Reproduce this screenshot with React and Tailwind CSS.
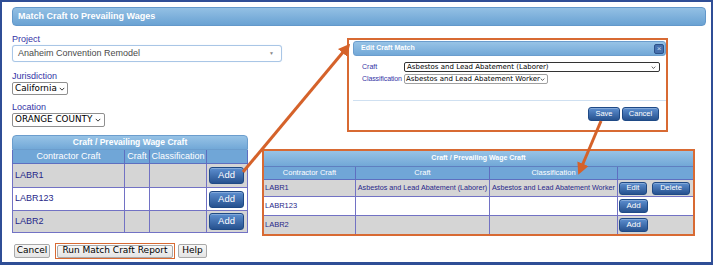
import React from 'react';

const labelCls = 'text-[9px] leading-[11px] text-[#3434a6]';

const Chevron = ({ className = '' }) => (
  <svg viewBox="0 0 8 5" className={className} fill="none" stroke="#222" strokeWidth="1.2">
    <path d="M1 1 L4 4 L7 1" />
  </svg>
);

const NativeSelect = ({ children, className = '' }) => (
  <div
    className={`flex items-center justify-between rounded-[2px] border border-[#8f8f8f] bg-white pl-[2px] pr-[3px] font-['DejaVu_Sans',sans-serif] text-black ${className}`}
  >
    <span className="whitespace-nowrap">{children}</span>
    <Chevron className="ml-[2px] h-[4px] w-[6px] shrink-0" />
  </div>
);

const BlueBtn = ({ children, className = '' }) => (
  <div
    className={`flex items-center justify-center rounded-[3px] border border-[#1f4a86] bg-linear-to-b from-[#5d8fd0] to-[#27528f] text-white shadow-[inset_0_1px_0_rgba(255,255,255,0.25)] ${className}`}
  >
    {children}
  </div>
);

const GrayBtn = ({ children, className = '' }) => (
  <div
    className={`flex items-center justify-center rounded-[2px] border border-[#a9a9a9] bg-linear-to-b from-[#f8f8f8] to-[#e4e4e4] font-['DejaVu_Sans',sans-serif] text-[9px] text-black ${className}`}
  >
    {children}
  </div>
);

const leftRows = [
  { name: 'LABR1', h: 'h-[24px]', bg: 'bg-[#d5d5d5]' },
  { name: 'LABR123', h: 'h-[23px]', bg: 'bg-white' },
  { name: 'LABR2', h: 'h-[22px]', bg: 'bg-[#d5d5d5]' },
];

const LeftTable = () => (
  <div className="w-[236px] shrink-0">
    <div className="flex h-[15px] items-center justify-center rounded-t-[4px] border border-[#6b9dcd] bg-linear-to-b from-[#97c3e6] to-[#72a8d7] text-[8.5px] font-bold text-white">
      Craft / Prevailing Wage Craft
    </div>
    <div className="flex h-[14px] border-x border-b border-[#5e6fc0] bg-[#70a6d7] text-[9px] text-white">
      <div className="flex w-[112px] items-center justify-center border-r border-[#5e6fc0]">Contractor Craft</div>
      <div className="flex w-[25px] items-center justify-center border-r border-[#5e6fc0]">Craft</div>
      <div className="flex w-[57px] items-center justify-center border-r border-[#5e6fc0]">Classification</div>
      <div className="flex-1" />
    </div>
    {leftRows.map((r) => (
      <div key={r.name} className={`flex ${r.h} ${r.bg} border-x border-b border-[#7272c4]`}>
        <div className="flex w-[112px] items-center border-r border-[#7272c4] pl-[2px] text-[9px] text-[#27278a]">
          {r.name}
        </div>
        <div className="w-[25px] border-r border-[#7272c4]" />
        <div className="w-[57px] border-r border-[#7272c4]" />
        <div className="flex flex-1 items-center pl-[2px]">
          <BlueBtn className="h-[17px] w-[35px] text-[9.5px]">Add</BlueBtn>
        </div>
      </div>
    ))}
  </div>
);

const rightRows = [
  { name: 'LABR1', h: 'h-[17px]', bg: 'bg-[#d5d5d5]', craft: 'Asbestos and Lead Abatement (Laborer)', cls: 'Asbestos and Lead Abatement Worker', edit: true },
  { name: 'LABR123', h: 'h-[19px]', bg: 'bg-white' },
  { name: 'LABR2', h: 'h-[18px]', bg: 'bg-[#d5d5d5]' },
];

const RightTable = () => (
  <div className="mt-[14px] ml-[14px] w-[433px] shrink-0 border-2 border-[#d86a33]">
    <div className="flex h-[16px] items-center justify-center border-b border-[#5e7fc0] bg-linear-to-b from-[#97c3e6] to-[#72a8d7] text-[7px] font-bold text-white">
      Craft / Prevailing Wage Craft
    </div>
    <div className="flex h-[13px] border-b border-[#5e6fc0] bg-[#70a6d7] text-[7.5px] text-white">
      <div className="flex w-[92px] items-center justify-center border-r border-[#5e6fc0]">Contractor Craft</div>
      <div className="flex w-[134px] items-center justify-center border-r border-[#5e6fc0]">Craft</div>
      <div className="flex w-[128px] items-center justify-center border-r border-[#5e6fc0]">Classification</div>
      <div className="flex-1" />
    </div>
    {rightRows.map((r, i) => (
      <div
        key={r.name}
        className={`flex ${r.h} ${r.bg} ${i < rightRows.length - 1 ? 'border-b border-[#7272c4]' : ''} text-[7.5px] text-[#27278a]`}
      >
        <div className="flex w-[92px] items-center border-r border-[#7272c4] pl-[1px]">{r.name}</div>
        <div className="flex w-[134px] items-center justify-center overflow-hidden whitespace-nowrap border-r border-[#7272c4] text-[7.2px]">
          {r.craft}
        </div>
        <div className="flex w-[128px] items-center justify-center overflow-hidden whitespace-nowrap border-r border-[#7272c4] text-[7.2px]">
          {r.cls}
        </div>
        <div className="flex flex-1 items-center gap-[5px] pl-[1px]">
          {r.edit ? (
            <>
              <BlueBtn className="h-[13px] w-[28px] text-[7.5px]">Edit</BlueBtn>
              <BlueBtn className="h-[13px] w-[38px] text-[7.5px]">Delete</BlueBtn>
            </>
          ) : (
            <BlueBtn className="h-[14px] w-[29px] text-[8px]">Add</BlueBtn>
          )}
        </div>
      </div>
    ))}
  </div>
);

const EditDialog = () => (
  <div className="mt-[4px] ml-[65px] h-[94px] w-[321px] shrink-0 border-2 border-[#d86a33] pt-[1px] pl-[4px]">
    <div className="flex h-[15px] items-center justify-between rounded-[3px] border border-[#6b9dcd] bg-linear-to-b from-[#97c3e6] to-[#72a8d7] pl-[7px] pr-[1px]">
      <span className="text-[7px] font-bold text-white">Edit Craft Match</span>
      <div className="flex h-[10px] w-[10px] items-center justify-center rounded-[2px] border border-[#2c5189] bg-[#4670ad] text-[8px] leading-none text-[#c9d8ee]">
        ×
      </div>
    </div>
    <div className="mt-[6px] flex h-[10px] items-center pl-[9px]">
      <span className="w-[42px] text-[7px] text-[#3434a6]">Craft</span>
      <div className="flex h-[10px] w-[256px] items-center justify-between rounded-[2px] border border-[#333] bg-white pl-[2px] pr-[3px] font-['DejaVu_Sans',sans-serif] text-[7px] text-black">
        <span>Asbestos and Lead Abatement (Laborer)</span>
        <Chevron className="h-[3px] w-[5px]" />
      </div>
    </div>
    <div className="mt-[2px] flex h-[10px] items-center pl-[9px]">
      <span className="w-[42px] text-[7px] tracking-[-0.1px] text-[#3434a6]">Classification</span>
      <div className="flex h-[10px] w-[144px] items-center justify-between rounded-[2px] border border-[#a0a0a0] bg-white pl-[1px] pr-[2px] font-['DejaVu_Sans',sans-serif] text-[7px] text-black">
        <span className="whitespace-nowrap">Asbestos and Lead Abatement Worker</span>
        <Chevron className="h-[3px] w-[5px]" />
      </div>
    </div>
    <div className="mt-[16px] h-px w-full bg-[#cfe0f1]" />
    <div className="mt-[6px] flex justify-end gap-[2px] pr-[7px]">
      <BlueBtn className="h-[14px] w-[32px] text-[7.5px]">Save</BlueBtn>
      <BlueBtn className="h-[14px] w-[37px] text-[7.5px]">Cancel</BlueBtn>
    </div>
  </div>
);

export default function App() {
  return (
    <div className="relative h-[265px] w-[713px] overflow-hidden bg-white font-['Liberation_Sans',Arial,sans-serif]">
      <div className="h-full w-full border-2 border-b-[3px] border-[#2f4e96] pl-[10px] pr-[5px]">
        <div className="mt-[5px] flex h-[19px] items-center rounded-[4px] border border-[#6398ca] bg-linear-to-b from-[#93c0e4] to-[#6aa2d3] pl-[5px] text-[9px] font-bold text-white">
          Match Craft to Prevailing Wages
        </div>

        <div className="mt-[8px] flex items-start">
          <div className="w-[270px] shrink-0">
            <div className={labelCls}>Project</div>
            <div className="flex h-[17px] items-center justify-between rounded-[3px] border border-[#a9c6e6] bg-white pl-[5px] pr-[7px] text-[9px] text-[#4a4a4a] shadow-[0_0_1px_#c9dcf0]">
              <span>Anaheim Convention Remodel</span>
              <span className="text-[5px] text-[#888]">▼</span>
            </div>
            <div className={`${labelCls} mt-[9px]`}>Jurisdiction</div>
            <NativeSelect className="h-[13px] w-[56px] text-[8.8px]">California</NativeSelect>
            <div className={`${labelCls} mt-[7px]`}>Location</div>
            <NativeSelect className="h-[14px] w-[93px] text-[8.8px]">ORANGE COUNTY</NativeSelect>
          </div>
          <EditDialog />
        </div>

        <div className="mt-[3px] flex items-start">
          <LeftTable />
          <RightTable />
        </div>

        <div className="mt-[7px] ml-[2px] flex items-center gap-[3px]">
          <GrayBtn className="h-[14px] w-[36px]">Cancel</GrayBtn>
          <div className="ml-[2px] flex h-[16px] items-center border-[1.5px] border-[#d86a33] px-[1px]">
            <GrayBtn className="h-[13px] w-[116px]">Run Match Craft Report</GrayBtn>
          </div>
          <GrayBtn className="h-[14px] w-[29px]">Help</GrayBtn>
        </div>
      </div>

      <svg className="pointer-events-none absolute inset-0" width="713" height="265">
        <defs>
          <marker id="ah" viewBox="0 0 10 10" refX="2" refY="5" markerWidth="4" markerHeight="4" orient="auto">
            <path d="M0 0 L10 5 L0 10 z" fill="#d5622a" />
          </marker>
        </defs>
        <line x1="243" y1="172" x2="344" y2="51" stroke="#d5622a" strokeWidth="3" markerEnd="url(#ah)" />
        <line x1="601" y1="121" x2="582" y2="166" stroke="#d5622a" strokeWidth="3" markerEnd="url(#ah)" />
      </svg>
    </div>
  );
}
